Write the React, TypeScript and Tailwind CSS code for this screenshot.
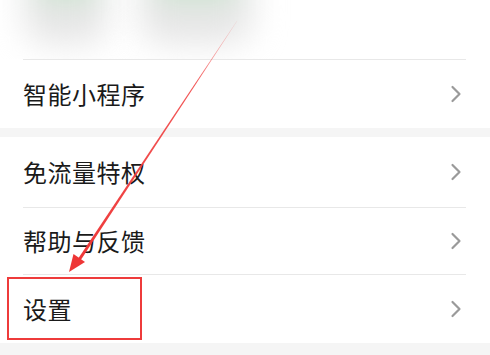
import React from 'react';

const Chevron = () => (
  <svg width="12" height="18" viewBox="0 0 12 18" fill="none" className="shrink-0">
    <path d="M2.5 2 L9.5 9 L2.5 16" stroke="#9a9a9a" strokeWidth="2.2" strokeLinecap="round" strokeLinejoin="round" />
  </svg>
);

const Row = ({ label, className }: { label: string; className: string }) => (
  <div className={`flex items-center justify-between pl-[23px] pr-[28px] bg-white ${className}`}>
    <span className="text-[24px] leading-none text-[#1a1a1a] tracking-[0.5px]">{label}</span>
    <Chevron />
  </div>
);

const Divider = () => (
  <div className="bg-white pl-[23px] pr-[24px]">
    <div className="h-px bg-[#e8e8e8]" />
  </div>
);

// blurred app icon peeking from above
const BlurIcon = ({ w }: { w: string }) => (
  <div className={`${w} -mt-[40px] h-[84px] flex flex-col items-center rounded-[24px] bg-[#e6e6e6] blur-[16px]`}>
    <div className="w-3/4 h-[36px] rounded-full bg-[#c4e4c9]" />
  </div>
);

export default function App() {
  return (
    <div
      className="relative w-[490px] h-[355px] overflow-hidden bg-[#f5f5f5] flex flex-col"
      style={{ fontFamily: '"Noto Sans CJK SC", "Noto Sans", sans-serif' }}
    >
      <div className="h-[59px] bg-white overflow-hidden flex items-start pl-[24px] gap-[32px]">
        <BlurIcon w="w-[84px]" />
        <BlurIcon w="w-[112px]" />
      </div>
      <Divider />
      <Row label="智能小程序" className="h-[68px]" />
      <div className="h-[9px] shrink-0" />
      <Row label="免流量特权" className="h-[70px]" />
      <Divider />
      <Row label="帮助与反馈" className="h-[66px]" />
      <Divider />
      <Row label="设置" className="h-[68px]" />

      {/* highlight box */}
      <div className="absolute left-[7px] top-[277px] w-[135px] h-[63px] border-2 border-[#ee3b3b]" />

      {/* arrow */}
      <svg className="absolute left-0 top-0 pointer-events-none" width="490" height="355" viewBox="0 0 490 355">
        <defs>
          <linearGradient id="fade" x1="237" y1="21" x2="70" y2="272" gradientUnits="userSpaceOnUse">
            <stop offset="0" stopColor="#f04545" stopOpacity="0.15" />
            <stop offset="0.25" stopColor="#f04545" stopOpacity="0.9" />
            <stop offset="1" stopColor="#ee3535" stopOpacity="1" />
          </linearGradient>
        </defs>
        <polygon points="237.2,20.9 236.8,21.1 78.2,258.4 80.8,260.1" fill="url(#fade)" />
        <polygon points="69,272 85,262 73.5,254" fill="#ee3535" />
      </svg>
    </div>
  );
}
